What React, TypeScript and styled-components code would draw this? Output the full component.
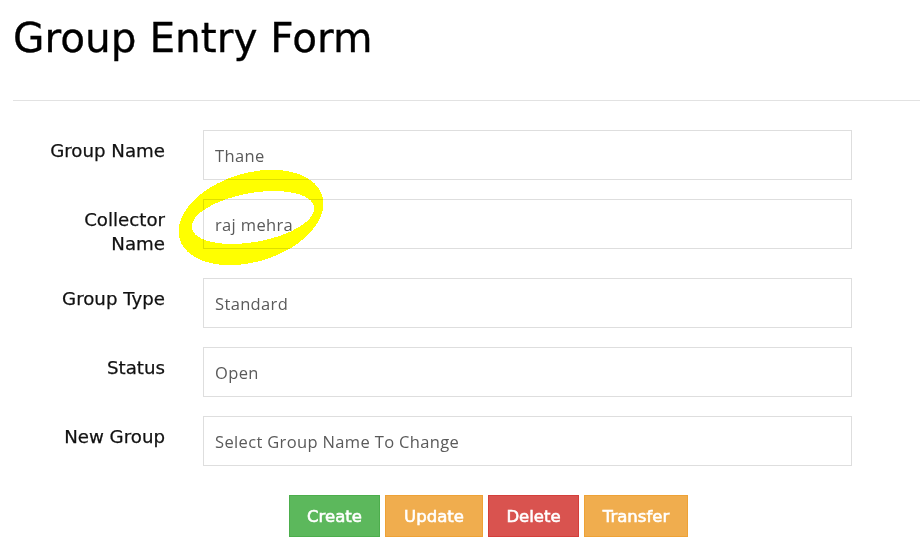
import React from 'react';
import styled, { createGlobalStyle } from 'styled-components';

const GlobalStyle = createGlobalStyle`
  html, body {
    margin: 0;
    padding: 0;
    background: #fff;
  }
  body {
    font-family: "DejaVu Sans", sans-serif;
  }
`;

const Page = styled.div`
  position: relative;
  width: 920px;
  height: 553px;
  overflow: hidden;
  padding: 16px 0 0 13px;
  box-sizing: border-box;
`;

const Title = styled.h1`
  margin: 0;
  font-family: "DejaVu Sans", sans-serif;
  font-weight: 400;
  font-size: 40.6px;
  line-height: 44px;
  color: #000;
  -webkit-text-stroke: 0.3px #000;
`;

const Divider = styled.hr`
  margin: 40px 0 29px;
  border: 0;
  border-top: 1px solid #e2e2e2;
`;

const Form = styled.form`
  display: grid;
  grid-template-columns: 152px 649px;
  column-gap: 38px;
  row-gap: 19px;
  align-items: start;
`;

const Label = styled.label`
  text-align: right;
  font-family: "DejaVu Sans", sans-serif;
  font-size: 18.2px;
  line-height: 24px;
  padding: 9px 0 3px;
  color: #111;
  -webkit-text-stroke: 0.25px #111;
`;

const Input = styled.input`
  box-sizing: border-box;
  width: 649px;
  height: 50px;
  border: 1px solid #dedede;
  border-radius: 0;
  padding: 0 11px;
  font-family: "Open Sans", Lato, sans-serif;
  font-size: 16.5px;
  letter-spacing: 0.35px;
  color: #5a5a5a;
  background: #fff;
  outline: none;

  &::placeholder {
    color: #5a5a5a;
  }
`;

const Actions = styled.div`
  display: flex;
  gap: 5px;
  margin: 29px 0 0 276px;
`;

const tones = {
  green: { bg: '#5cb85c', border: '#4cae4c' },
  orange: { bg: '#f0ad4e', border: '#eea236' },
  red: { bg: '#d9534f', border: '#d43f3a' },
};

const Button = styled.button<{ $tone: keyof typeof tones; $w: number }>`
  width: ${(p) => p.$w}px;
  height: 42px;
  padding: 0;
  border: 1px solid ${(p) => tones[p.$tone].border};
  border-radius: 0;
  background: ${(p) => tones[p.$tone].bg};
  color: #fff;
  font-family: "DejaVu Sans", sans-serif;
  font-weight: 400;
  font-size: 16.5px;
  -webkit-text-stroke: 0.6px #fff;
  cursor: pointer;
`;

const Highlight = styled.svg`
  position: absolute;
  top: 0;
  left: 0;
  pointer-events: none;
  mix-blend-mode: multiply;
`;

const fields = [
  { label: 'Group Name', value: 'Thane' },
  { label: 'Collector Name', value: 'raj mehra', wrap: true },
  { label: 'Group Type', value: 'Standard' },
  { label: 'Status', value: 'Open' },
  { label: 'New Group', placeholder: 'Select Group Name To Change' },
];

export default function App() {
  return (
    <>
      <GlobalStyle />
      <Page>
        <Title>Group Entry Form</Title>
        <Divider />
        <Form onSubmit={(e) => e.preventDefault()}>
          {fields.map((f) => (
            <React.Fragment key={f.label}>
              <Label>
                {f.wrap ? (
                  <>
                    Collector
                    <br />
                    Name
                  </>
                ) : (
                  f.label
                )}
              </Label>
              <Input defaultValue={f.value} placeholder={f.placeholder} readOnly />
            </React.Fragment>
          ))}
        </Form>
        <Actions>
          <Button $tone="green" $w={91}>Create</Button>
          <Button $tone="orange" $w={98}>Update</Button>
          <Button $tone="red" $w={91}>Delete</Button>
          <Button $tone="orange" $w={104}>Transfer</Button>
        </Actions>
        <Highlight width="920" height="553" viewBox="0 0 920 553" shapeRendering="crispEdges">
          <path
            fill="#ffff00"
            fillRule="evenodd"
            d="M322 195 A74 44 -17 1 0 180 240 A74 44 -17 1 0 322 195 Z M314.1 206.7 A62 24.5 -10 1 0 191.9 228.3 A62 24.5 -10 1 0 314.1 206.7 Z"
          />
        </Highlight>
      </Page>
    </>
  );
}
